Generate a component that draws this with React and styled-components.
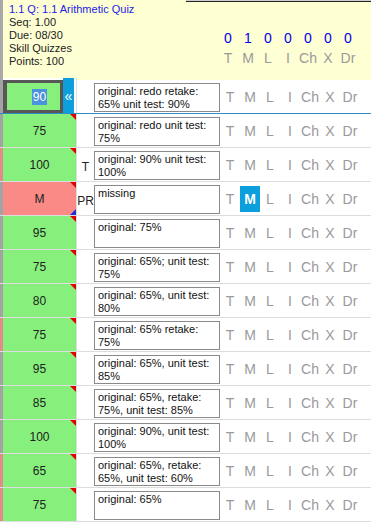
import React from 'react';
import styled, { createGlobalStyle } from 'styled-components';

const GlobalStyle = createGlobalStyle`
  body {
    margin: 0;
    background: #fff;
    font-family: "Liberation Sans", Arial, Helvetica, sans-serif;
  }
`;

const FLAGS = ['T', 'M', 'L', 'I', 'Ch', 'X', 'Dr'];
const COUNTS = [0, 1, 0, 0, 0, 0, 0];

const rows = [
  { score: '90', edit: true, comment: 'original: redo retake: 65% unit test: 90%', strip: 'gray' },
  { score: '75', comment: 'original: redo unit test: 75%', strip: 'gray' },
  { score: '100', code: 'T', comment: 'original: 90% unit test: 100%', strip: 'pink' },
  { score: 'M', missing: true, code: 'PR', comment: 'missing', strip: 'gray', flag: 'M' },
  { score: '95', comment: 'original: 75%', strip: 'gray' },
  { score: '75', comment: 'original: 65%; unit test: 75%', strip: 'gray' },
  { score: '80', comment: 'original: 65%, unit test: 80%', strip: 'gray' },
  { score: '75', comment: 'original: 65% retake: 75%', strip: 'pink' },
  { score: '95', comment: 'original: 65%, unit test: 85%', strip: 'gray' },
  { score: '85', comment: 'original: 65%, retake: 75%, unit test: 85%', strip: 'gray' },
  { score: '100', comment: 'original: 90%, unit test: 100%', strip: 'gray' },
  { score: '65', comment: 'original: 65%, retake: 65%, unit test: 60%', strip: 'pink' },
  { score: '75', comment: 'original: 65%', strip: 'pink' },
];

function App() {
  return (
    <Sheet>
      <GlobalStyle />
      <Header>
        <Info>
          <Title>1.1 Q: 1.1 Arithmetic Quiz</Title>
          <div>Seq: 1.00</div>
          <div>Due: 08/30</div>
          <div>Skill Quizzes</div>
          <div>Points: 100</div>
        </Info>
        <Counts>
          <FlagGrid>
            {COUNTS.map((n, i) => <Count key={i}>{n}</Count>)}
          </FlagGrid>
          <FlagGrid>
            {FLAGS.map(f => <CountLabel key={f}>{f}</CountLabel>)}
          </FlagGrid>
        </Counts>
      </Header>

      {rows.map((r, i) => (
        <Row key={i} active={r.edit}>
          <Strip tone={r.strip} />
          {r.edit ? (
            <EditCell>
              <ScoreInput><Selected>{r.score}</Selected></ScoreInput>
              <ExpandButton>«</ExpandButton>
            </EditCell>
          ) : (
            <ScoreCell missing={r.missing}>
              {r.score}
              <Corner />
              {r.missing && <Corner bottom />}
            </ScoreCell>
          )}
          <Code>{r.code}</Code>
          <CommentBox>{r.comment}</CommentBox>
          <FlagGrid row>
            {FLAGS.map(f => (
              <Flag key={f} on={r.flag === f}>{f}</Flag>
            ))}
          </FlagGrid>
        </Row>
      ))}
    </Sheet>
  );
}

export default App;

const Sheet = styled.div`
  width: 371px;
  color: #111;
`

const Header = styled.div`
  display: flex;
  height: 80px;
  background: #ffffd4;
  border-left: 3px solid #a9a9a9;
`

const Info = styled.div`
  width: 177px;
  padding: 3px 0 0 6px;
  font-size: 11px;
  line-height: 13px;
  color: #222;
`

const Title = styled.div`
  color: #2323e6;
`

const Counts = styled.div`
  flex: 1;
  display: flex;
  flex-direction: column;
  justify-content: flex-end;
  padding: 0 0 12px 32px;
  border-top: 1px solid #cfcfcf;
  box-shadow: inset 0 1px 0 #222;
`

const FlagGrid = styled.div`
  display: grid;
  grid-template-columns: repeat(7, 20px);
  font-size: 14px;
  line-height: 20px;
  text-align: center;
  ${p => p.row && `
    align-items: center;
    height: 33px;
  `}
`

const Count = styled.div`
  color: #0000f0;
`

const CountLabel = styled.div`
  color: #9a9a9a;
`

const Row = styled.div`
  display: grid;
  grid-template-columns: 3px 74px 17px 126px 1fr;
  height: 34px;
  box-sizing: border-box;
  border-bottom: 1px solid ${p => (p.active ? '#2b8fc4' : '#dddddd')};
`

const Strip = styled.div`
  background: ${p => (p.tone === 'pink' ? '#e58a8a' : '#a3a3a3')};
`

const ScoreCell = styled.div`
  position: relative;
  display: flex;
  align-items: center;
  justify-content: center;
  background: ${p => (p.missing ? '#f98a86' : '#87f07d')};
  border-right: 1px solid #dddddd;
  font-size: 12px;
  color: #222;
`

const Corner = styled.span`
  position: absolute;
  right: 0;
  ${p => (p.bottom ? 'bottom: 0;' : 'top: 0;')}
  width: 0;
  height: 0;
  border-style: solid;
  ${p =>
    p.bottom
      ? 'border-width: 0 0 6px 6px; border-color: transparent transparent #1a2fd6 transparent;'
      : 'border-width: 0 6px 6px 0; border-color: transparent #e00000 transparent transparent;'}
`

const EditCell = styled.div`
  display: flex;
  margin-top: -2px;
  border-right: 1px solid #dddddd;
  padding-right: 2px;
  background: #fff;
`

const ScoreInput = styled.div`
  width: 60px;
  box-sizing: border-box;
  display: flex;
  align-items: center;
  justify-content: center;
  padding-left: 12px;
  margin-top: 2px;
  background: #87f07d;
  border: 3px solid #575757;
  border-left-width: 4px;
  font-size: 12px;
`

const Selected = styled.span`
  background: #4a92dc;
  color: #fff;
  padding: 1px 1px;
`

const ExpandButton = styled.div`
  width: 11px;
  display: flex;
  align-items: center;
  justify-content: center;
  background: #0c9fdc;
  color: #fff;
  font-size: 14px;
`

const Code = styled.div`
  align-self: center;
  margin-top: 5px;
  font-size: 12px;
  text-align: center;
  white-space: nowrap;
  color: #222;
`

const CommentBox = styled.div`
  height: 29px;
  margin-top: 3px;
  box-sizing: border-box;
  padding: 1px 3px 0;
  border: 1px solid #8a8a8a;
  background: #fff;
  font-size: 11px;
  line-height: 13px;
  color: #111;
  overflow: hidden;
`

const Flag = styled.div`
  color: ${p => (p.on ? '#fff' : '#9a9a9a')};
  background: ${p => (p.on ? '#0b9fdd' : 'transparent')};
  font-weight: ${p => (p.on ? 'bold' : 'normal')};
  height: 26px;
  line-height: 26px;
`
